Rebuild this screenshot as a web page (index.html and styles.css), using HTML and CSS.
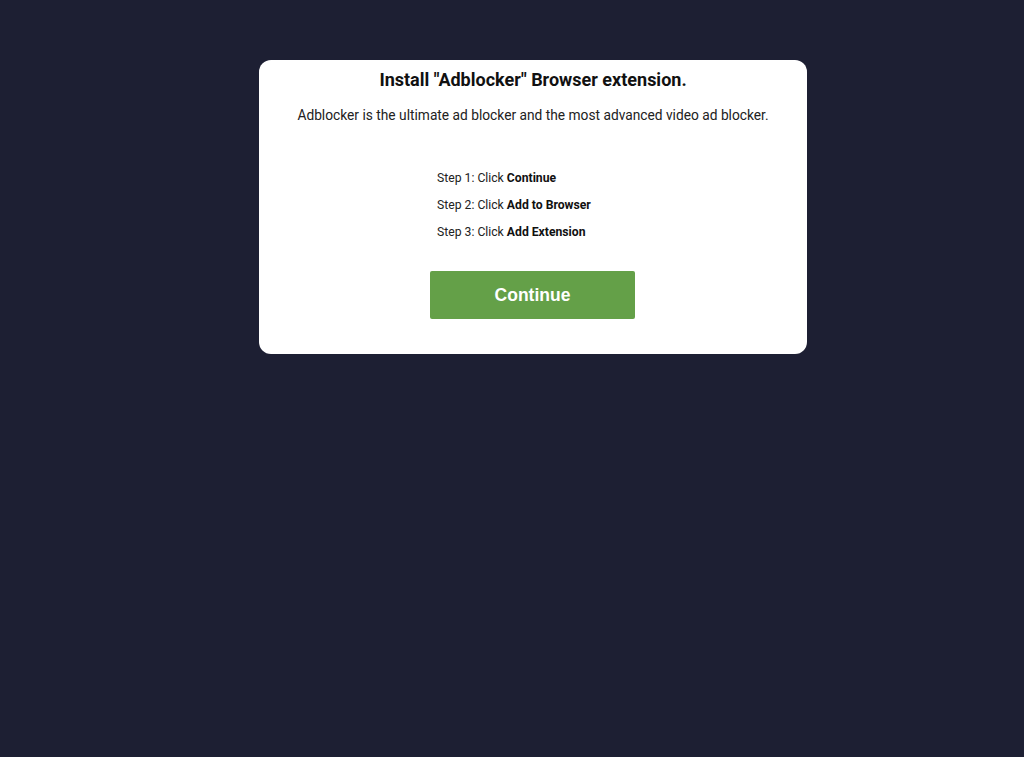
FILE: index.html
```html
<!DOCTYPE html>
<html>
<head>
<meta charset="utf-8">
<link rel="stylesheet" href="styles.css">
</head>
<body>
<div class="card">
  <h1 class="title">Install "Adblocker" Browser extension.</h1>
  <p class="sub">Adblocker is the ultimate ad blocker and the most advanced video ad blocker.</p>
  <ul class="steps">
    <li>Step 1: Click <b>Continue</b></li>
    <li>Step 2: Click <b>Add to Browser</b></li>
    <li>Step 3: Click <b>Add Extension</b></li>
  </ul>
  <button class="btn">Continue</button>
</div>
</body>
</html>
```
FILE: styles.css
```css
html, body {
  margin: 0;
  padding: 0;
  background: #1d1f33;
  height: 100%;
}
body {
  font-family: Roboto, "Liberation Sans", sans-serif;
  padding-top: 60px;
  box-sizing: border-box;
}
.card {
  margin-left: 259px;
  width: 548px;
  height: 294px;
  box-sizing: border-box;
  background: #fff;
  border-radius: 12px;
  padding-top: 10px;
  display: flex;
  flex-direction: column;
  align-items: center;
  color: #111;
}
.title {
  margin: 0;
  font-size: 18px;
  font-weight: 700;
  line-height: 20px;
}
.sub {
  margin: 15px 0 0;
  font-size: 13.75px;
  line-height: 20px;
  color: #222;
}
.steps {
  list-style: none;
  margin: 45px 0 0 8px;
  padding: 0;
  width: 200px;
  font-size: 12.2px;
  line-height: 16px;
  color: #222;
}
.steps li {
  margin-bottom: 11px;
}
.steps b {
  color: #111;
}
.btn {
  margin-top: 20px;
  margin-right: 1px;
  width: 205px;
  height: 48px;
  border: none;
  border-radius: 2px;
  background: #64a048;
  color: #fff;
  font-family: "Liberation Sans", Arial, sans-serif;
  font-weight: 700;
  font-size: 17.5px;
  padding: 0;
}
```
